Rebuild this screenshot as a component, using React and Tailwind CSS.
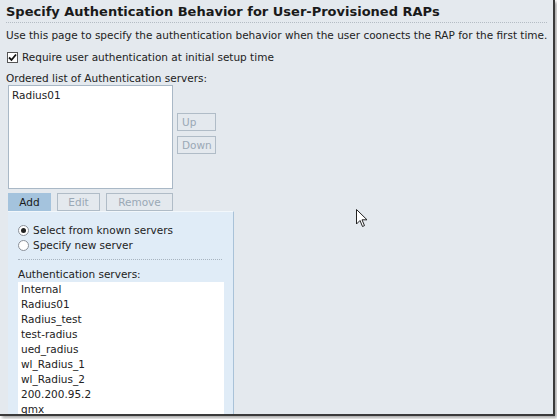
import React from "react";

const servers = [
  "Internal",
  "Radius01",
  "Radius_test",
  "test-radius",
  "ued_radius",
  "wl_Radius_1",
  "wl_Radius_2",
  "200.200.95.2",
  "qmx",
];

function Radio({ checked, label }) {
  return (
    <label className="flex items-center gap-[4px] h-[15px]">
      <span className="w-[11px] h-[11px] rounded-full border border-[#8a9099] bg-white flex items-center justify-center">
        {checked && <span className="w-[5px] h-[5px] rounded-full bg-[#222]" />}
      </span>
      <span>{label}</span>
    </label>
  );
}

export default function App() {
  return (
    <div className="w-[557px] h-[419px] bg-white relative overflow-hidden">
      {/* window with dark edge + shadow */}
      <div className="w-[555px] h-[416px] bg-[#e4e9ee] border-r-2 border-b-2 border-[#3a3a3a] shadow-[2px_2px_3px_rgba(0,0,0,0.35)] overflow-hidden text-[10.5px] text-[#222] font-['DejaVu_Sans',Verdana,sans-serif] leading-none">
        <div className="px-[6px] pt-[4px]">
          <h1 className="text-[13px] font-bold text-[#1a1a1a] pt-[1px] pb-[4px] border-b border-dotted border-[#b4bcc4] whitespace-nowrap">
            Specify Authentication Behavior for User-Provisioned RAPs
          </h1>
          <p className="mt-[7px] whitespace-nowrap">
            Use this page to specify the authentication behavior when the user coonects the RAP for the first time.
          </p>

          <label className="mt-[11px] flex items-center gap-[4px] ml-[1px]">
            <span className="w-[11px] h-[11px] border border-[#555] bg-white flex items-center justify-center">
              <svg width="9" height="9" viewBox="0 0 9 9">
                <path d="M1 4.5 L3.5 7 L8 1.5" fill="none" stroke="#111" strokeWidth="1.8" />
              </svg>
            </span>
            <span>Require user authentication at initial setup time</span>
          </label>

          <p className="mt-[10px]">Ordered list of Authentication servers:</p>

          <div className="mt-[2px] ml-[2px] flex gap-[4px]">
            <div className="w-[165px] h-[104px] bg-white border border-[#a9b8c6] px-[3px] pt-[4px]">
              Radius01
            </div>
            <div className="pt-[28px] flex flex-col gap-[5px]">
              <button className="w-[39px] h-[18px] border border-[#b0bcc7] text-left pl-[4px] text-[#9aa8b5]">Up</button>
              <button className="w-[39px] h-[18px] border border-[#b0bcc7] text-left pl-[4px] text-[#9aa8b5]">Down</button>
            </div>
          </div>

          <div className="ml-[2px] mt-[4px] flex gap-[6px] items-end">
            <button className="w-[43px] h-[18px] bg-[#a4c3dd] text-[#1a1a1a]">Add</button>
            <button className="w-[43px] h-[18px] border border-[#b0bcc7] text-[#9aa8b5]">Edit</button>
            <button className="w-[67px] h-[18px] border border-[#b0bcc7] text-[#9aa8b5]">Remove</button>
          </div>

          <div className="ml-[2px] w-[226px] h-[220px] bg-[#e0ecf7] border-r border-[#a9c2d8] border-t border-t-[#f2f7fb] px-[10px] pt-[11px]">
            <div className="flex flex-col gap-0">
              <Radio checked label="Select from known servers" />
              <Radio label="Specify new server" />
            </div>
            <div className="mt-[6px] mr-[1px] border-b border-dotted border-[#a8b4c0]" />
            <p className="mt-[9px]">Authentication servers:</p>
            <ul className="mt-[2px] bg-white w-[206px] h-[160px] pl-[3px]">
              {servers.map((s) => (
                <li key={s} className="h-[15px] flex items-center">{s}</li>
              ))}
            </ul>
          </div>
        </div>
      </div>

      {/* mouse cursor */}
      <svg className="absolute left-[356px] top-[209px]" width="13" height="19" viewBox="0 0 13 19">
        <path d="M0.5 0.5 L0.5 15 L4 11.5 L6.5 17.5 L8.5 16.6 L6 10.8 L11 10.8 Z" fill="white" stroke="#222" strokeWidth="1" strokeLinejoin="round" />
      </svg>
    </div>
  );
}
